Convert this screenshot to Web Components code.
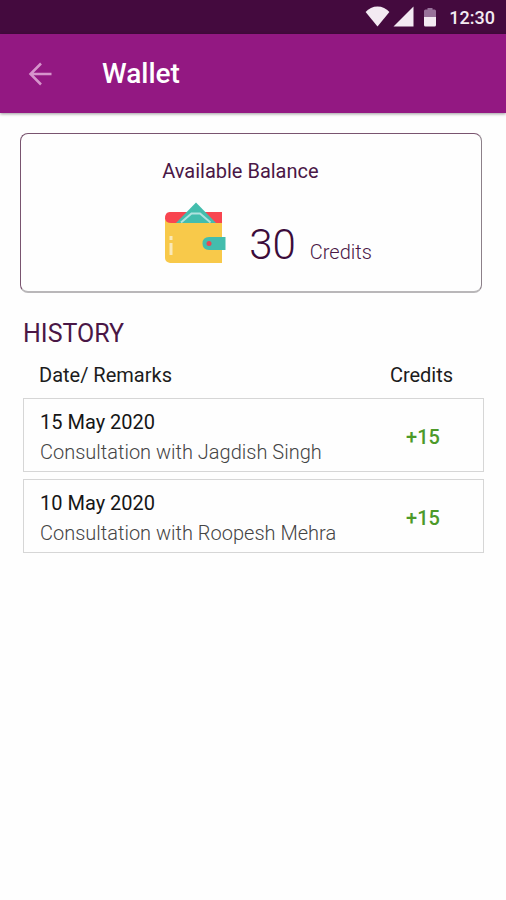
<!DOCTYPE html>
<html lang="en">
<head>
<meta charset="utf-8">
<meta name="viewport" content="width=device-width, initial-scale=1">
<title>Wallet</title>
<style>
  body { margin: 0; background: #fefefe; font-family: Roboto, "Noto Sans", sans-serif; color: #222; }
</style>
</head>
<body>
<wallet-screen></wallet-screen>
<script>
class BaseElement extends HTMLElement {
  connectedCallback() {
    if (!this.shadowRoot) this.attachShadow({ mode: "open" }).innerHTML = this.render();
  }
}

customElements.define("status-bar", class extends BaseElement {
  render() {
    return `<style>
      :host { display: flex; align-items: center; justify-content: flex-end; height: 34px; padding: 0 11px 0 16px; box-sizing: border-box; background: #440a3e; color: #f3eaf2; font-size: 18px; font-weight: 500; }
      svg { display: block; margin-right: 11px; }
    </style>
    <svg width="73" height="22" viewBox="0 0 73 22" fill="#f3eaf2" aria-hidden="true">
      <path d="M.6 6C3.500 2.500 8 .5 12.500 .5s9 2 11.900 5.500L12.500 20.500z"/>
      <path d="M48.500 .5v20h-20z"/>
      <path d="M59 5q0-1.500 1.500-1.500h2V2h5v1.500h2q1.500 0 1.500 1.500V11H59z" fill="#98729a"/>
      <path d="M59 11h12v8q0 1.500-1.500 1.500h-9Q59 20.500 59 19z"/>
    </svg>
    <time>12:30</time>`;
  }
});

customElements.define("app-bar", class extends BaseElement {
  render() {
    return `<style>
      :host { display: flex; align-items: center; gap: 38px; height: 79px; padding: 0 16px; box-sizing: border-box; background: #931882; color: #fff; box-shadow: 0 1px 3px rgba(0,0,0,.4); }
      button { display: flex; align-items: center; justify-content: center; width: 48px; height: 48px; padding: 0; border: 0; background: none; color: #d694cc; cursor: pointer; }
      h1 { margin: 0; font-size: 28px; line-height: 32px; font-weight: 500; }
    </style>
    <button type="button" aria-label="Back">
      <svg width="24" height="24" viewBox="0 0 24 24" fill="none" stroke="currentColor" stroke-width="2.500"><path d="M23.500 12H3M13 1.500 2.500 12 13 22.500"/></svg>
    </button>
    <h1><slot></slot></h1>`;
  }
});

customElements.define("wallet-icon", class extends BaseElement {
  render() {
    return `<style>:host, svg { display: block; }</style>
    <svg width="62" height="62" viewBox="0 0 62 62" aria-hidden="true">
      <path d="M7 10h51v16H7Q1 24 1 16.500T7 10z" fill="#f84550"/>
      <path d="M32 .5 52 21H12z" fill="#43bdad"/>
      <path d="M17 20.500 27.500 11.500h8.500L46.500 20.500" fill="none" stroke="#b0e2df" stroke-width="2"/>
      <path d="M1 17q1 4 6 4h51v40H6Q1 60 1 56z" fill="#f8c94a"/>
      <path d="M7 34v4M7 41v12" fill="none" stroke="#fae9b8" stroke-width="3"/>
      <path d="M45 35h16.500v13H45q-6.500 0-6.500-6.500T45 35z" fill="#43bdad"/>
      <circle cx="45" cy="41.500" r="2.500" fill="#e64752"/>
    </svg>`;
  }
});

customElements.define("balance-card", class extends BaseElement {
  render() {
    return `<style>
      :host { display: flex; flex-direction: column; align-items: center; margin: 20px 24px 0 20px; padding: 25px 16px 22px 48px; border: 1px solid #79546f; border-right-color: #8c8089; border-bottom: 2px solid #b9b7b9; border-radius: 8px; color: #4a1746; }
      .content { display: flex; flex-direction: column; }
      h2 { margin: 0; font-size: 20px; line-height: 24px; font-weight: 400; }
      .amount { display: flex; align-items: flex-start; margin: 19px 0 0 2px; }
      p { display: flex; align-items: baseline; gap: 14px; margin: 19px 0 0 23px; line-height: 48px; }
      strong { font-size: 42px; font-weight: 300; color: #3c0c3a; }
      span { font-size: 20px; line-height: 24px; font-weight: 300; }
    </style>
    <div class="content">
      <h2><slot name="label"></slot></h2>
      <div class="amount"><wallet-icon></wallet-icon><p><strong><slot></slot></strong><span><slot name="unit"></slot></span></p></div>
    </div>`;
  }
});

customElements.define("credit-history", class extends BaseElement {
  render() {
    const rows = [...this.querySelectorAll("history-entry")].map(e => `
      <tr><td><b>${e.getAttribute("date")}</b><span>${e.textContent}</span></td><td class="credit">${e.getAttribute("credits")}</td></tr>`).join("");
    return `<style>
      :host { display: block; margin: 23px 22px 0 23px; }
      h2 { margin: 0; font-size: 25px; line-height: 36px; font-weight: 400; color: #4a1746; }
      table { width: 100%; border-collapse: separate; border-spacing: 0 7px; font-size: 20px; }
      th { padding: 0 0 0 16px; font-weight: 400; line-height: 32px; text-align: left; color: #1c1c1c; }
      th:last-child, td.credit { width: 120px; padding: 0; text-align: center; }
      td { padding: 8px 0 4px 16px; border: 1px solid #d6d6d6; border-right: 0; }
      td.credit { padding: 4px 0 0 4px; border-left: 0; border-right: 1px solid #d6d6d6; color: #4d9a29; font-weight: 500; }
      b, span { display: block; line-height: 30px; }
      b { font-weight: 400; color: #161616; }
      span { font-weight: 300; color: #444; }
    </style>
    <h2 id="title">${this.getAttribute("heading")}</h2>
    <table aria-labelledby="title">
      <thead><tr><th scope="col">Date/ Remarks</th><th scope="col">Credits</th></tr></thead>
      <tbody>${rows}</tbody>
    </table>`;
  }
});

customElements.define("wallet-screen", class extends BaseElement {
  render() {
    return `<style>:host { display: block; }</style>
    <status-bar></status-bar>
    <app-bar>Wallet</app-bar>
    <main>
      <balance-card><span slot="label">Available Balance</span>30<span slot="unit">Credits</span></balance-card>
      <credit-history heading="HISTORY">
        <history-entry date="15 May 2020" credits="+15">Consultation with Jagdish Singh</history-entry>
        <history-entry date="10 May 2020" credits="+15">Consultation with Roopesh Mehra</history-entry>
      </credit-history>
    </main>`;
  }
});
</script>
</body>
</html>
